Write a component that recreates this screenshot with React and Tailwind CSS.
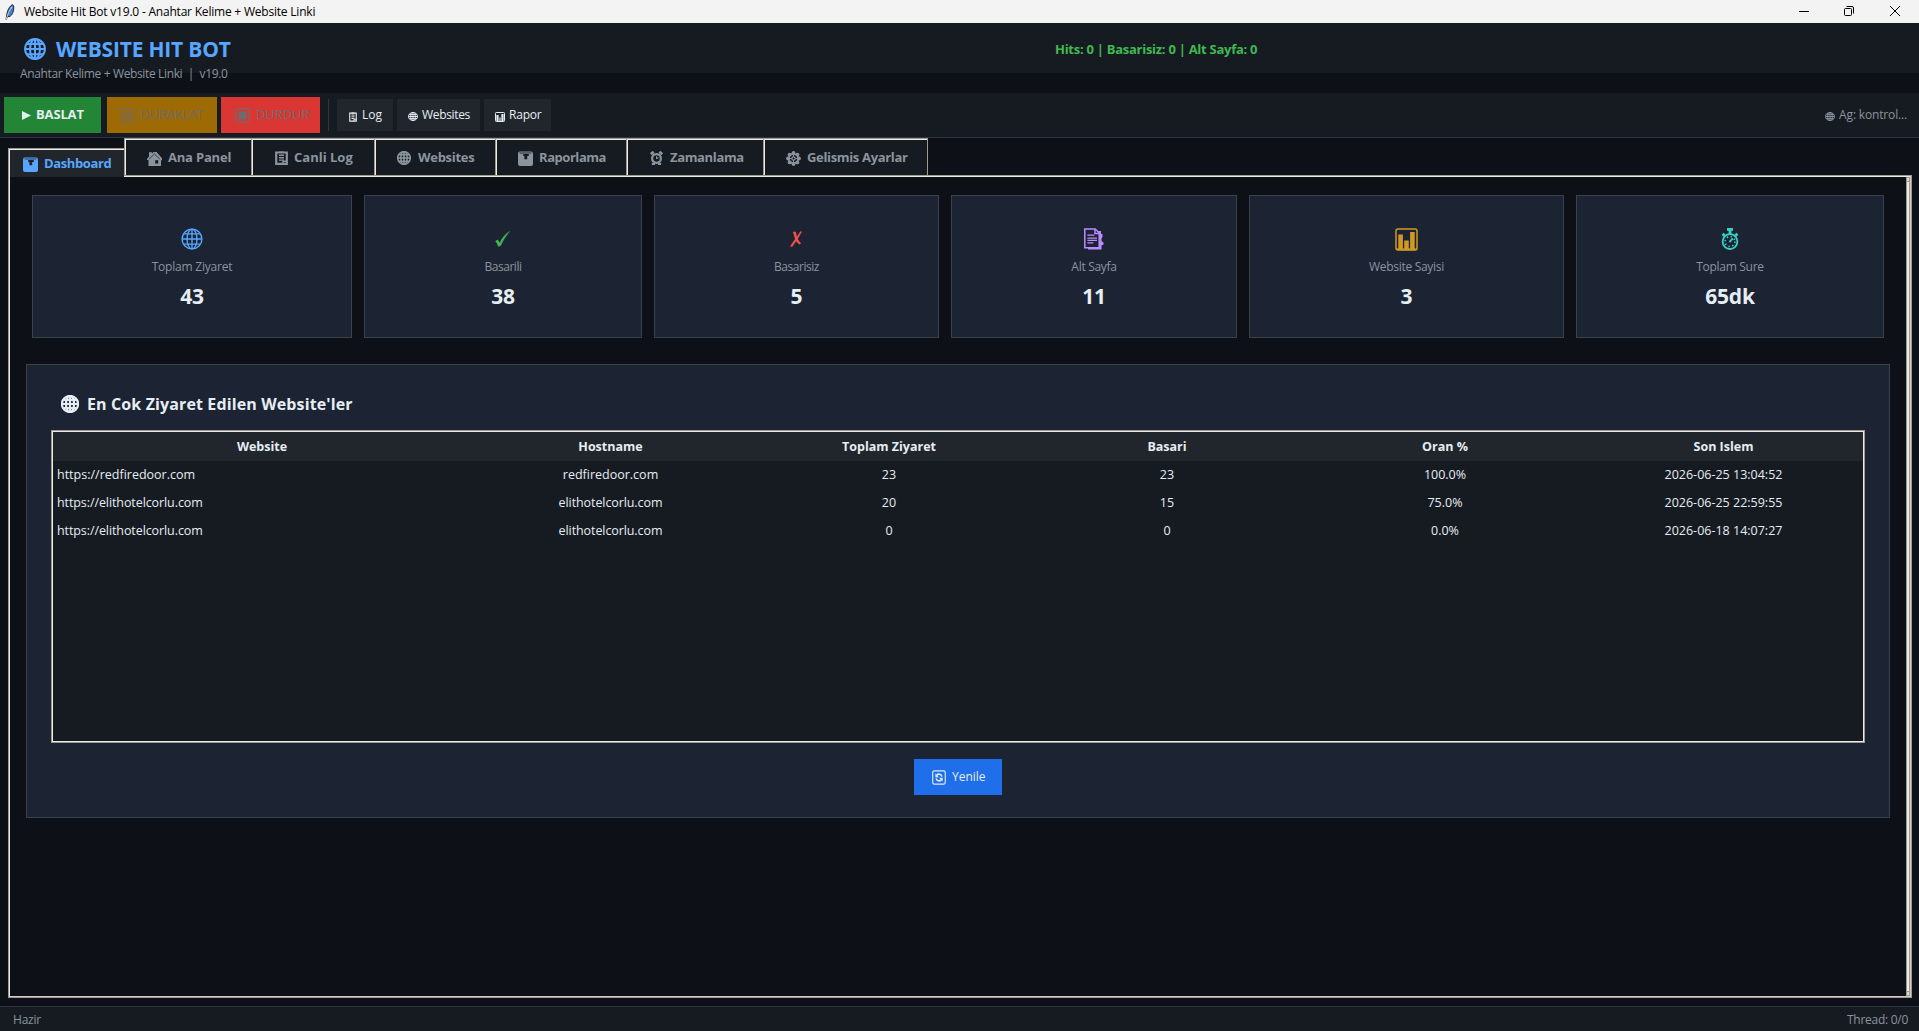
const Svg = ({ box = "0 0 24 24", className, children }) => (
  <svg viewBox={box} className={`shrink-0 ${className}`} fill="none" stroke="currentColor" preserveAspectRatio="none">
    {children}
  </svg>
);

const Globe = ({ className, sw = 2 }) => (
  <Svg className={className}>
    <g strokeWidth={sw}>
      <circle cx="12" cy="12" r="10.8" />
      <ellipse cx="12" cy="12" rx="5.4" ry="10.8" />
      <path d="M12 1.2v21.6M1.2 12h21.6M3 6.4h18M3 17.6h18" />
    </g>
  </Svg>
);

const ChartTile = ({ className, cut }) => (
  <Svg box="0 0 15 15" className={className}>
    <rect x="0" y="0.5" width="15" height="14.5" rx="2" fill="currentColor" stroke="none" />
    <path d="M1.5 2h12" stroke={cut} strokeWidth="1.4" opacity="0.6" />
    <path d="M5.2 3h5.6v2H9.2v3.2H6.4V5H5.2z" fill={cut} stroke="none" />
  </Svg>
);

const House = ({ className, cut }) => (
  <Svg box="0 0 15 15" className={className}>
    <path d="M0 8 2 5.5V1.2h3v1.3L6.500 1h3L15 7.200v2h-1V15H1.500V9H0z" fill="currentColor" stroke="none" />
    <path d="m2.200 8 5.200-5 5.400 5" stroke={cut} strokeWidth="0.9" opacity="0.8" />
    <path d="M8.200 9.200h3v3.400h-3z" fill={cut} stroke="none" />
  </Svg>
);

const Clipboard = ({ className, sw = 2.2 }) => (
  <Svg box="0 0 13 15" className={className}>
    <path d="M1.2 1.6h10.6v12.2H1.2z" strokeWidth={sw} />
    <path d="M4 1.4h5M4 4.6h5M4 7.2h5M4 9.8h5" strokeWidth="1.5" />
    <path d="M8 14v-3h4" strokeWidth="1.4" />
  </Svg>
);

const Alarm = ({ className }) => (
  <Svg box="0 0 14 15" className={className}>
    <circle cx="7" cy="8" r="4.7" strokeWidth="2.4" />
    <path d="M0.8 3.4 4 0.9M13.2 3.4 10 0.9" strokeWidth="3" />
    <path d="M7 8.6V5.6M6.6 8.4 9 7" strokeWidth="1.1" />
    <path d="M2 13.800h3.400M8.600 13.800H12" strokeWidth="2.200" />
  </Svg>
);

const petals = [[7.5, 2], [11.4, 3.6], [13, 7.5], [11.4, 11.4], [7.5, 13], [3.6, 11.4], [2, 7.5], [3.6, 3.6]];

const Gear = ({ className }) => (
  <Svg box="0 0 15 15" className={className}>
    {petals.map(([x, y]) => <circle key={`${x}-${y}`} cx={x} cy={y} r="1.9" fill="currentColor" stroke="none" />)}
    <circle cx="7.5" cy="7.5" r="4.7" strokeWidth="1.7" />
    <circle cx="7.5" cy="7.5" r="1.7" strokeWidth="1.2" />
    <path d="M7.5 3v2.600M7.500 9.400V12M3 7.500h2.600M9.400 7.500H12" strokeWidth="1" />
  </Svg>
);

const Check = () => (
  <Svg box="0 0 15 16" className="w-[15px] h-4 mr-[2px]">
    <path d="M0.5 10.2 2.6 8.8 4.8 12C7 7 10 3 14.6 0.4 11 4.4 8 9.4 5.8 14.4L3.4 15.6C2.8 13.4 1.8 11.6 0.5 10.2z" fill="currentColor" strokeWidth="0.4" />
  </Svg>
);

const Cross = () => (
  <Svg box="0 0 12 16" className="w-3 h-4 mr-[2px]">
    <path d="M3.2 0.9h2.4C6.200 3.400 6.400 4.600 6.900 6L10.600 0.400l1 .4L7.600 7.800c.8 2 1.800 3.300 3.200 4.400L9.400 13.200C7.800 12.200 6.800 11 6.200 9.800L2.200 15.600.400 15.200C2 12.600 3.800 10.400 5.400 8 4.500 5.500 4 3.500 3.200.9z" fill="currentColor" strokeWidth="0.5" />
  </Svg>
);

const Pages = () => (
  <Svg box="0 0 22 22" className="w-[22px] h-[22px]">
    <path d="M14.500 3h3.500v3h1.500v3l-1 1.500V13l2 1.500v2l-2 1V21.500H5V19.500h10.500z" fill="currentColor" stroke="none" />
    <path d="M1.800 1h10.400l4 4v14.800H1.800z" fill="#1c2333" strokeWidth="1.500" />
    <path d="M12 1v4.400h4.400" strokeWidth="1.500" />
    <path d="M4.400 7.200h7M4.400 10.200h9.600M4.400 12.400h9.600M4.400 14.800h6" strokeWidth="1.200" />
  </Svg>
);

const Chart = () => (
  <Svg box="0 0 23 23" className="w-[23px] h-[23px]">
    <rect x="1" y="1" width="21" height="21" rx="2" strokeWidth="1.500" />
    <path d="M1.500 21.300h20" strokeWidth="1.800" />
    <path d="M5.600 6.500V21M11.500 12.500V21M17.400 4V21" strokeWidth="4.600" />
  </Svg>
);

const Stopwatch = () => (
  <Svg box="0 0 18 22" className="w-[18px] h-[22px]">
    <circle cx="9" cy="13.600" r="7.400" strokeWidth="1.800" />
    <circle cx="9" cy="13.600" r="4.900" strokeWidth="1.600" strokeDasharray="1.400 2.450" />
    <path d="M6 1.400h6" strokeWidth="2.800" />
    <path d="M9 2v4M1.600 7.800l2-2M16.400 7.800l-2-2" strokeWidth="2.800" />
    <path d="m8.400 14.200 3.400-3.800" strokeWidth="1.800" />
  </Svg>
);

const Boxed = ({ className, children }) => (
  <Svg box="0 0 15 15" className={className}>
    <rect x="0.800" y="0.800" width="13.400" height="13.400" rx="1.800" strokeWidth="1.200" />
    {children}
  </Svg>
);

const MiniChart = () => (
  <Svg box="0 0 10 10" className="w-2.5 h-2.5">
    <rect x="0.500" y="0.500" width="9" height="9" rx="0.800" strokeWidth="1" />
    <path d="M2.500 3v6M7.500 2v7" strokeWidth="2.200" />
    <path d="M5 5.500v4" strokeWidth="1.200" />
  </Svg>
);

const Feather = () => (
  <Svg box="0 0 10 16" className="w-2.5 h-4">
    <path d="M1.200 15.500C1.400 10 3 3.500 7 .8 9.600.2 9 6 7.500 9.500 6.300 12 4.500 13 2.600 12.500z" fill="#4a7fc4" stroke="#1d2a3d" strokeWidth="1" />
    <path d="M1.200 15.500C2.500 10.500 4.500 6 7 3" stroke="#cfe0f2" strokeWidth="0.900" />
  </Svg>
);

const INACTIVE = "#161b22";

const tabs = [
  { label: "Ana Panel", w: "w-[127px]", pad: "pl-[21px]", gap: "gap-1.5", tr: "tracking-[-0.2px]", icon: <House className="w-[15px] h-[15px]" cut={INACTIVE} /> },
  { label: "Canli Log", w: "w-[123px]", pad: "pl-[22px]", gap: "gap-[6px]", tr: "tracking-[0px]", icon: <Clipboard className="w-[13px] h-[14px]" /> },
  { label: "Websites", w: "w-[121px]", pad: "pl-[21px]", gap: "gap-[7px]", tr: "tracking-[-0.3px]", icon: <Globe className="w-[14px] h-[14px]" sw={2.8} /> },
  { label: "Raporlama", w: "w-[131px]", pad: "pl-[21px]", gap: "gap-1.5", tr: "tracking-[-0.45px]", icon: <ChartTile className="w-[15px] h-[15px]" cut={INACTIVE} /> },
  { label: "Zamanlama", w: "w-[137px]", pad: "pl-[22px]", gap: "gap-[7px]", tr: "tracking-[-0.35px]", icon: <Alarm className="w-[13px] h-[14px]" /> },
  { label: "Gelismis Ayarlar", w: "w-[164px]", pad: "pl-[21px]", gap: "gap-[6px]", tr: "tracking-[-0.34px]", icon: <Gear className="w-[15px] h-[15px]" /> },
];

const cards = [
  { label: "Toplam Ziyaret", value: "43", w: "w-[320px]", color: "text-[#58a6ff]", tr: "tracking-[-0.22px]", icon: <Globe className="w-[22px] h-[22px]" sw={1.5} /> },
  { label: "Basarili", value: "38", w: "w-[278px]", color: "text-[#3fb950]", tr: "tracking-[-0.45px]", icon: <Check /> },
  { label: "Basarisiz", value: "5", w: "w-[285px]", color: "text-[#f85149]", tr: "tracking-[-0.45px]", icon: <Cross /> },
  { label: "Alt Sayfa", value: "11", w: "w-[286px]", color: "text-[#bc8cff]", tr: "tracking-[-0.3px]", icon: <Pages /> },
  { label: "Website Sayisi", value: "3", w: "w-[315px]", color: "text-[#d29922]", tr: "tracking-[-0.29px]", icon: <Chart /> },
  { label: "Toplam Sure", value: "65dk", w: "w-[308px]", color: "text-[#39d2c0]", tr: "tracking-[-0.3px]", icon: <Stopwatch /> },
];

const columns = ["Website", "Hostname", "Toplam Ziyaret", "Basari", "Oran %", "Son Islem"];
const rows = [
  { tr: "", cells: ["https://redfiredoor.com", "redfiredoor.com", "23", "23", "100.0%", "2026-06-25 13:04:52"] },
  { tr: "tracking-[-0.09px]", cells: ["https://elithotelcorlu.com", "elithotelcorlu.com", "20", "15", "75.0%", "2026-06-25 22:59:55"] },
  { tr: "tracking-[-0.09px]", cells: ["https://elithotelcorlu.com", "elithotelcorlu.com", "0", "0", "0.0%", "2026-06-18 14:07:27"] },
];
const GRID = "grid grid-cols-[418px_279px_278px_278px_278px_279px] items-center text-[12.5px]";

function TitleBar() {
  return (
    <div className="h-[23px] bg-[#f3f3f3] text-black flex items-center pl-[5px] pr-[19px] shrink-0">
      <Feather />
      <span className="ml-[9px] text-xs tracking-[-0.21px]">Website Hit Bot v19.0 - Anahtar Kelime + Website Linki</span>
      <div className="ml-auto flex items-center pb-[2px]">
        <Svg box="0 0 10 10" className="w-2.5 h-2.5"><path d="M0 5.500h10" /></Svg>
        <Svg box="0 0 10 10" className="w-2.5 h-2.5 ml-[35px]">
          <rect x="0.500" y="2.500" width="7" height="7" rx="1" />
          <path d="M2.500.500H8A1.500 1.500 0 0 1 9.500 2v5.500" />
        </Svg>
        <Svg box="0 0 10 10" className="w-2.5 h-2.5 ml-9"><path d="m0 0 10 10M10 0 0 10" /></Svg>
      </div>
    </div>
  );
}

function Header() {
  return (
    <header className="h-[70px] shrink-0 flex bg-[linear-gradient(#161b22_50px,#0d1117_50px)]">
      <div className="w-[1055px]">
        <div className="flex items-center h-[30px] mt-[11px] pl-6 text-[#58a6ff]">
          <Globe className="w-[22px] h-[22px]" sw={2.2} />
          <h1 className="ml-[10px] text-[21px] leading-[30px] font-bold tracking-[-0.2px]">WEBSITE HIT BOT</h1>
        </div>
        <p className="pl-5 mt-[2px] h-4 text-xs tracking-[-0.36px] text-[#8b949e] whitespace-pre">{"Anahtar Kelime + Website Linki  |  v19.0"}</p>
      </div>
      <div className="mt-4 text-[13px] leading-5 font-bold tracking-[-0.27px] text-[#3fb950]">Hits: 0 | Basarisiz: 0 | Alt Sayfa: 0</div>
    </header>
  );
}

function Toolbar() {
  return (
    <div className="h-[45px] shrink-0 bg-[#161b22] border-b border-[#30363d] flex items-center pl-1 pr-3 text-[#e6edf3]">
      <button className="w-[97px] h-9 bg-[#238636] flex items-center pl-[18px] text-[13px] font-bold tracking-[-0.15px]">
        <Svg box="0 0 9 9" className="w-[9px] h-[9px] mt-px"><path d="M0 0l9 4.500L0 9z" fill="currentColor" stroke="none" /></Svg>
        <span className="ml-[5px]">BASLAT</span>
      </button>
      <button className="ml-1.5 w-[110px] h-9 bg-[#9e6a03] text-[#6d6d6d] flex items-center pl-[13px] text-[13px] tracking-[-0.22px]">
        <Boxed className="w-[15px] h-[15px]"><path d="M5.800 4v7M9.200 4v7" strokeWidth="2" /></Boxed>
        <span className="ml-[5px]">DURAKLAT</span>
      </button>
      <button className="ml-1 w-[99px] h-9 bg-[#da3633] text-[#6d6d6d] flex items-center pl-[14px] text-[13px] tracking-[-0.07px]">
        <Boxed className="w-[15px] h-[15px]"><rect x="3.500" y="3.500" width="8" height="8" fill="currentColor" stroke="none" /></Boxed>
        <span className="ml-1.5">DURDUR</span>
      </button>
      <div className="ml-2 w-px h-8 bg-[#30363d]" />
      <button className="ml-2 w-14 h-8 bg-[#21262d] flex items-center pl-3 text-xs">
        <Clipboard className="w-2 h-[10px] mt-[3px]" sw={1.8} />
        <span className="ml-[5px]">Log</span>
      </button>
      <button className="ml-1 w-[83px] h-8 bg-[#21262d] flex items-center pl-[11px] text-xs tracking-[-0.33px]">
        <Globe className="w-[10px] h-[9px] mt-[3px]" sw={2.4} />
        <span className="ml-1">Websites</span>
      </button>
      <button className="ml-1 w-[67px] h-8 bg-[#21262d] flex items-center pl-[11px] text-xs tracking-[-0.2px]">
        <span className="mt-[3px]"><MiniChart /></span>
        <span className="ml-1">Rapor</span>
      </button>
      <div className="ml-auto flex items-center text-xs tracking-[-0.16px] text-[#8b949e]">
        <Globe className="w-[10px] h-[9px] mt-[3px]" sw={2.4} />
        <span className="ml-1">Ag: kontrol...</span>
      </div>
    </div>
  );
}

function Tabs() {
  return (
    <nav className="relative z-10 h-[39px] shrink-0 pl-2 flex items-start text-[13px] font-bold text-[#8b949e]">
      <div className="mt-[10px] w-[116px] h-[29px] border-l border-t border-[#9e9a91]">
        <div className="h-full border-l border-t border-[#eeebe7] bg-[#21262d] flex items-center pl-[13px] pt-px gap-[6px] text-[#58a6ff]">
          <ChartTile className="w-[15px] h-[15px]" cut="#21262d" />
          <span className="tracking-[-0.38px]">Dashboard</span>
        </div>
      </div>
      {tabs.map((t) => (
        <div key={t.label} className={`${t.w} h-[37px] border-l border-t border-[#9e9a91]`}>
          <div className={`h-full border-l border-t border-[#eeebe7] bg-[#161b22] flex items-center pt-px ${t.pad} ${t.gap}`}>
            {t.icon}
            <span className={t.tr}>{t.label}</span>
          </div>
        </div>
      ))}
      <div className="w-px h-[37px] bg-[#9e9a91]" />
    </nav>
  );
}

function StatCard({ card }) {
  return (
    <div className={`${card.w} h-[143px] bg-[#1c2333] border border-[#3b414b] flex flex-col items-center`}>
      <div className={`mt-[31px] h-6 flex items-center ${card.color}`}>{card.icon}</div>
      <div className={`mt-2 h-4 leading-4 text-xs text-[#8b949e] ${card.tr}`}>{card.label}</div>
      <div className="mt-[6px] h-[30px] leading-[30px] text-[21px] font-bold tracking-[-0.2px] text-[#e6edf3]">{card.value}</div>
    </div>
  );
}

function SitesTable() {
  return (
    <div className="h-[313px] border border-[#9e9a91]">
      <div className="h-full border border-[#eeebe7] bg-[#161b22] text-[#e6edf3]">
        <div className={`${GRID} h-[29px] pt-px bg-[#21262d] font-bold text-center`}>
          {columns.map((c) => <div key={c}>{c}</div>)}
        </div>
        {rows.map((r, i) => (
          <div key={i} className={`${GRID} h-7 text-center`}>
            {r.cells.map((cell, j) => (
              <div key={j} className={j === 0 ? `text-left pl-1 ${r.tr}` : j === 1 ? r.tr : ""}>{cell}</div>
            ))}
          </div>
        ))}
      </div>
    </div>
  );
}

function ScrollTrack() {
  return (
    <div className="w-1 shrink-0 flex flex-col">
      <div className="h-[5px] bg-[#9e9a91] p-px"><div className="h-full bg-[#dcdad5]" /></div>
      <div className="flex-1 border-x border-[#9e9a91] bg-[#eeebe7]" />
      <div className="h-[5px] bg-[#9e9a91] p-px"><div className="h-full bg-[#dcdad5]" /></div>
    </div>
  );
}

export default function App() {
  return (
    <div className="w-[1919px] h-[1031px] overflow-hidden flex flex-col bg-[#0d1117] font-['Open_Sans','Noto_Sans',sans-serif] whitespace-nowrap">
      <TitleBar />
      <Header />
      <Toolbar />
      <Tabs />
      <div className="-mt-[2px] ml-2 w-[1904px] h-[823px] shrink-0 border border-[#9e9a91]">
        <div className="h-full border border-t-[#eeebe7] border-l-[#eeebe7] border-r-[#cfcdc8] border-b-[#cfcdc8] flex">
          <main className="flex-1 pl-4 pr-4 pt-[18px]">
            <section className="flex gap-3 pl-1.5">
              {cards.map((c) => <StatCard key={c.label} card={c} />)}
            </section>
            <section className="mt-[26px] w-[1864px] h-[454px] bg-[#1c2333] border border-[#3b414b] px-6">
              <h2 className="mt-[25px] h-[28px] pl-[10px] pb-px flex items-center text-base font-bold tracking-[0.12px] text-[#e6edf3]">
                <Globe className="w-[18px] h-[18px]" sw={2.9} />
                <span className="ml-2">En Cok Ziyaret Edilen Website'ler</span>
              </h2>
              <div className="mt-3">
                <SitesTable />
              </div>
              <button className="mt-4 mx-auto w-[88px] h-9 bg-[#1f6feb] text-[#e6edf3] text-xs flex items-center pl-[18px]">
                <Boxed className="w-[14px] h-[15px]">
                  <path d="M10.600 6.600A3.300 3.300 0 0 0 5 5.200M4.400 8.400A3.300 3.300 0 0 0 10 9.800" strokeWidth="1.700" />
                  <path d="M3.600 3.400v3.800h3.800zM11.400 11.600V7.800H7.600z" fill="currentColor" stroke="none" />
                </Boxed>
                <span className="ml-1.5">Yenile</span>
              </button>
            </section>
          </main>
          <ScrollTrack />
        </div>
      </div>
      <footer className="mt-2 flex-1 bg-[#161b22] border-t border-[#30363d] flex items-center justify-between pl-[13px] pr-[11px] pt-px text-xs text-[#8b949e]">
        <span className="tracking-[-0.2px]">Hazir</span>
        <span className="tracking-[-0.27px]">Thread: 0/0</span>
      </footer>
    </div>
  );
}
